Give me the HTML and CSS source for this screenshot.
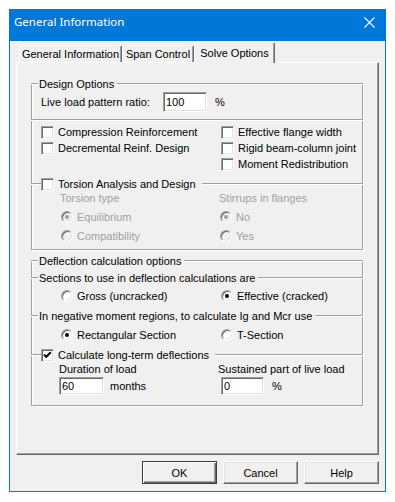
FILE: index.html
```html
<!DOCTYPE html>
<html>
<head>
<meta charset="utf-8">
<title>General Information</title>
<link rel="stylesheet" href="styles.css">
</head>
<body>
<div class="window">
  <div class="titlebar">
    <span class="title">General Information</span>
    <svg class="close" width="11" height="11" viewBox="0 0 11 11"><path d="M0.5 0.5L10.5 10.5M10.5 0.5L0.5 10.5" stroke="#fff" stroke-width="1.1" fill="none"/></svg>
  </div>
  <div class="tabs">
    <div class="tab t1">General Information</div>
    <div class="tab t2">Span Control</div>
    <div class="tab t3 sel">Solve Options</div>
  </div>
  <div class="panel">
    <div class="group g1">
      <div class="hdr first"><span class="ln lead"></span><span class="lbl">Design Options</span><span class="ln fill"></span></div>
      <div class="liverow">
        <span class="lt">Live load pattern ratio:</span>
        <span class="edit e100">100</span>
        <span class="pct">%</span>
      </div>
      <div class="hdr plain"><span class="ln fill"></span></div>
      <div class="checks">
        <div class="chk"><span class="cb"></span><span>Compression Reinforcement</span></div>
        <div class="chk"><span class="cb"></span><span>Effective flange width</span></div>
        <div class="chk"><span class="cb"></span><span>Decremental Reinf. Design</span></div>
        <div class="chk"><span class="cb"></span><span>Rigid beam-column joint</span></div>
        <div class="chk"></div>
        <div class="chk"><span class="cb"></span><span>Moment Redistribution</span></div>
      </div>
      <div class="hdr tors"><span class="ln lead2"></span><span class="cb"></span><span class="lbl cbl">Torsion Analysis and Design</span><span class="ln fill"></span></div>
      <div class="tcols">
        <div class="tcol tl">
          <div class="cap dis">Torsion type</div>
          <div class="rrow first-r"><span class="rb dis on"></span><span class="dis">Equilibrium</span></div>
          <div class="rrow"><span class="rb dis"></span><span class="dis">Compatibility</span></div>
        </div>
        <div class="tcol tr">
          <div class="cap dis">Stirrups in flanges</div>
          <div class="rrow first-r"><span class="rb dis on"></span><span class="dis">No</span></div>
          <div class="rrow"><span class="rb dis"></span><span class="dis">Yes</span></div>
        </div>
      </div>
    </div>

    <div class="group g2">
      <div class="hdr first"><span class="ln lead"></span><span class="lbl">Deflection calculation options</span><span class="ln fill"></span></div>
      <div class="hdr m3"><span class="ln lead"></span><span class="lbl">Sections to use in deflection calculations are</span><span class="ln fill"></span></div>
      <div class="r2 m1">
        <div class="rc rl"><span class="rb"></span><span>Gross (uncracked)</span></div>
        <div class="rc"><span class="rb on"></span><span>Effective (cracked)</span></div>
      </div>
      <div class="hdr m4"><span class="ln lead"></span><span class="lbl">In negative moment regions, to calculate Ig and Mcr use</span><span class="ln fill"></span></div>
      <div class="r2 m2">
        <div class="rc rl"><span class="rb on"></span><span>Rectangular Section</span></div>
        <div class="rc"><span class="rb"></span><span>T-Section</span></div>
      </div>
      <div class="hdr m4"><span class="ln lead2"></span><span class="cb"><svg width="11" height="11" viewBox="0 0 11 11"><path d="M2 4.6L4.2 6.8L8.8 2.2" stroke="#000" stroke-width="2" fill="none"/></svg></span><span class="lbl cbl">Calculate long-term deflections</span><span class="ln fill"></span></div>
      <div class="dl labels">
        <div class="dcol">Duration of load</div>
        <div class="dcol2">Sustained part of live load</div>
      </div>
      <div class="dl inputs">
        <div class="dcol"><span class="edit e60">60</span><span class="months">months</span></div>
        <div class="dcol2"><span class="edit e0">0</span><span class="pct">%</span></div>
      </div>
    </div>
  </div>
  <div class="buttons">
    <div class="btn def">OK</div>
    <div class="btn">Cancel</div>
    <div class="btn">Help</div>
  </div>
</div>
</body>
</html>
```

FILE: styles.css
```css
html, body {
  margin: 0;
  padding: 0;
  background: #fff;
}
body {
  font-family: "Liberation Sans", Arial, sans-serif;
  font-size: 11px;
  color: #000;
}
.window {
  margin: 9px 0 0 9px;
  width: 377px;
  height: 483px;
  box-sizing: border-box;
  border: 1px solid #0078d7;
  background: #f0f0f0;
  display: flex;
  flex-direction: column;
}
.titlebar {
  height: 31px;
  flex: none;
  background: #0078d7;
  color: #fff;
  display: flex;
  align-items: flex-start;
  font-family: "Noto Sans", sans-serif;
  font-size: 11.5px;
}
.title {
  margin: 4px 0 0 4px;
  line-height: 16px;
}
.close {
  margin: 7px 10px 0 auto;
  display: block;
}
.tabs {
  display: flex;
  align-items: flex-end;
  height: 21px;
  flex: none;
  margin: 0 6px;
  padding-left: 3px;
}
.tab {
  height: 17px;
  box-sizing: border-box;
  border-left: 1px solid #fff;
  border-top: 1px solid #fff;
  border-right: 1px solid #696969;
  box-shadow: inset -1px 0 0 #a0a0a0;
  border-radius: 2px 2px 0 0;
  display: flex;
  align-items: center;
  justify-content: center;
  white-space: nowrap;
}
.t1 { width: 103px; }
.t2 { width: 72px; }
.t3 { width: 81px; }
.tab.sel {
  height: 21px;
  margin-bottom: -1px;
  padding-bottom: 1px;
  background: #f0f0f0;
  position: relative;
  z-index: 1;
}
.panel {
  margin: 0 6px;
  height: 393px;
  flex: none;
  box-sizing: border-box;
  border: 1px solid;
  border-color: #fff #696969 #696969 #fff;
  box-shadow: inset -1px -1px 0 #a0a0a0;
  padding: 20px 0 0 14px;
}
.group {
  width: 332px;
  box-sizing: border-box;
  border: 1px solid #a0a0a0;
  border-top: 0;
  box-shadow: 1px 1px 0 #fff, inset 1px 0 0 #fff;
  display: flex;
  flex-direction: column;
}
.g1 { height: 167px; }
.g2 { height: 146px; margin-top: 10px; }
.hdr {
  display: flex;
  align-items: center;
  height: 14px;
  line-height: 14px;
  margin-left: -1px;
  margin-right: -1px;
  white-space: nowrap;
}
.hdr.first { margin-top: -6px; }
.hdr.plain { margin-top: 1px; }
.hdr.tors { margin-top: 5px; }
.hdr.m3 { margin-top: 3px; }
.hdr.m4 { margin-top: 4px; }
.ln {
  height: 0;
  border-top: 1px solid #a0a0a0;
  border-bottom: 1px solid #fff;
}
.lead { width: 7px; }
.lead2 { width: 10px; }
.fill { flex: 1; }
.lbl { padding: 0 3px 0 1px; }
.lbl.cbl { padding: 0 6px 0 4px; }

.cb {
  width: 13px;
  height: 13px;
  flex: none;
  box-sizing: border-box;
  background: #fff;
  border: 1px solid;
  border-color: #a0a0a0 #fff #fff #a0a0a0;
  box-shadow: inset 1px 1px 0 #696969, inset -1px -1px 0 #e3e3e3;
  display: inline-flex;
  align-items: center;
  justify-content: center;
}
.cb svg { display: block; }

.rb {
  width: 12px;
  height: 12px;
  flex: none;
  box-sizing: border-box;
  border-radius: 50%;
  background: #fff;
  border: 1px solid;
  border-color: #a0a0a0 #fff #fff #a0a0a0;
  box-shadow: inset 1px 1px 0 #696969, inset -1px -1px 0 #e3e3e3;
  display: inline-flex;
  align-items: center;
  justify-content: center;
  margin-right: 4px;
}
.rb.on::after {
  content: "";
  width: 4px;
  height: 4px;
  border-radius: 50%;
  background: #000;
}
.rb.dis { background: #f0f0f0; }
.rb.dis.on::after { background: #a0a0a0; }
.dis { color: #a0a0a0; }

.liverow {
  display: flex;
  align-items: center;
  height: 20px;
  margin: 1px 0 0 9px;
}
.lt { width: 122px; }
.edit {
  box-sizing: border-box;
  background: #fff;
  border: 1px solid;
  border-color: #a0a0a0 #fff #fff #a0a0a0;
  box-shadow: inset 1px 1px 0 #696969, inset -1px -1px 0 #e3e3e3;
  padding-left: 2px;
  display: inline-flex;
  align-items: center;
  flex: none;
}
.e100 { width: 44px; height: 20px; }
.e60 { width: 45px; height: 18px; }
.e0 { width: 43px; height: 18px; margin-left: 3px; }
.pct { margin-left: 8px; }
.months { margin-left: 6px; }

.checks {
  display: grid;
  grid-template-columns: 180px auto;
  grid-auto-rows: 16px;
  margin: -3px 0 0 9px;
}
.chk {
  display: flex;
  align-items: center;
  white-space: nowrap;
}
.chk .cb { margin-right: 4px; }

.tcols {
  display: flex;
  margin: -1px 0 0 28px;
}
.tcol.tl { width: 159px; }
.cap {
  height: 16px;
  line-height: 16px;
}
.rrow {
  height: 19px;
  display: flex;
  align-items: center;
  white-space: nowrap;
}
.rrow.first-r { margin-top: 1px; }
.tcol.tl .rrow { padding-left: 1px; }
.tcol.tr .rrow { padding-left: 1px; }

.r2 {
  display: flex;
  height: 19px;
  margin-left: 29px;
}
.r2.m1 { margin-top: 1px; }
.r2.m2 { margin-top: 2px; }
.rc {
  display: flex;
  align-items: center;
  white-space: nowrap;
}
.rc.rl { width: 160px; }

.dl {
  display: flex;
  margin-left: 27px;
  white-space: nowrap;
}
.dl.labels {
  height: 16px;
  line-height: 16px;
  margin-top: -1px;
}
.dl.inputs {
  height: 18px;
  align-items: center;
}
.dcol {
  width: 159px;
  display: flex;
  align-items: center;
}
.dcol2 {
  display: flex;
  align-items: center;
}

.buttons {
  display: flex;
  justify-content: flex-end;
  gap: 6px;
  margin: 6px 6px 0;
  flex: none;
}
.btn {
  width: 75px;
  height: 23px;
  box-sizing: border-box;
  border: 1px solid;
  border-color: #fff #696969 #696969 #fff;
  box-shadow: inset -1px -1px 0 #a0a0a0, inset 1px 1px 0 #e3e3e3;
  display: flex;
  align-items: center;
  justify-content: center;
}
.btn.def {
  border-color: #3c3c3c;
  box-shadow: inset 1px 1px 0 #fff, inset -1px -1px 0 #696969, inset -2px -2px 0 #a0a0a0;
}
```
